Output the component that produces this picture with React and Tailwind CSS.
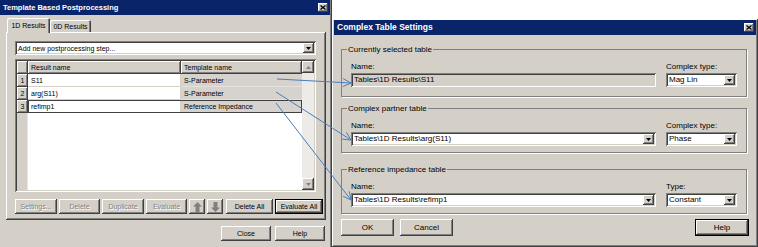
import React from 'react';

// classic 3D bevels
const RAISED = 'shadow-[inset_-1px_-1px_0_#404040,inset_1px_1px_0_#ffffff,inset_-2px_-2px_0_#808080]';
const SUNKEN = 'shadow-[inset_1px_1px_0_#808080,inset_-1px_-1px_0_#ffffff,inset_2px_2px_0_#404040,inset_-2px_-2px_0_#d4d0c8]';
const DEFAULT_BTN = 'shadow-[inset_0_0_0_1px_#000000,inset_-2px_-2px_0_#404040,inset_2px_2px_0_#ffffff,inset_-3px_-3px_0_#808080]';

// blue arrows from the template cells to the dialog fields
const ARROWS = [
  [277, 79, 351, 83],
  [276, 92, 351, 140],
  [276, 103, 351, 200],
];

const arrowHead = (x1, y1, x2, y2) => {
  const l = Math.hypot(x2 - x1, y2 - y1);
  const ux = (x2 - x1) / l;
  const uy = (y2 - y1) / l;
  const bx = x2 - 8 * ux;
  const by = y2 - 8 * uy;
  return `M${bx - 4 * uy} ${by + 4 * ux} L${x2} ${y2} L${bx + 4 * uy} ${by - 4 * ux}`;
};

const TitleBar = ({ title, textClass }) => (
  <div className="h-[15px] bg-[#0a246a] flex items-center justify-between pl-[3px] pr-[2px]">
    <span className={`text-white font-bold ${textClass}`}>{title}</span>
    <div className={`w-[10px] h-[9px] bg-[#d4d0c8] flex items-center justify-center ${RAISED}`}>
      <svg width="6" height="5" viewBox="0 0 6 5">
        <path d="M0.5 0.5 L5.5 4.5 M5.5 0.5 L0.5 4.5" stroke="#000" strokeWidth="1.3" />
      </svg>
    </div>
  </div>
);

const Btn = ({ label, className = '', disabled, isDefault }) => (
  <div
    className={`flex items-center justify-center bg-[#d4d0c8] ${isDefault ? DEFAULT_BTN : RAISED} ${
      disabled ? 'text-[#808080] [text-shadow:1px_1px_0_#ffffff]' : 'text-black'
    } ${className}`}
  >
    {label}
  </div>
);

const DropArrow = () => (
  <div className={`w-[11px] h-full bg-[#d4d0c8] flex items-center justify-center ${RAISED}`}>
    <svg width="5" height="3" viewBox="0 0 5 3">
      <path d="M0 0 H5 L2.5 3 Z" fill="#000" />
    </svg>
  </div>
);

const Combo = ({ value, className = '', readOnly }) => (
  <div className={`h-[14px] p-[2px] flex items-center ${SUNKEN} ${readOnly ? 'bg-[#d4d0c8]' : 'bg-white'} ${className}`}>
    <span className="flex-1 pl-[1px] whitespace-nowrap">{value}</span>
    {!readOnly && <DropArrow />}
  </div>
);

const ScrollArrow = ({ up }) => (
  <div className={`h-[12px] bg-[#d4d0c8] flex items-center justify-center ${RAISED}`}>
    <svg width="5" height="3" viewBox="0 0 5 3">
      <path d={up ? 'M0 3 H5 L2.5 0 Z' : 'M0 0 H5 L2.5 3 Z'} fill="#808080" />
    </svg>
  </div>
);

const MoveBtn = ({ up }) => (
  <div className={`w-[16px] flex items-center justify-center bg-[#d4d0c8] ${RAISED}`}>
    <svg width="9" height="10" viewBox="0 0 9 10">
      <path
        d={up ? 'M4.5 0 L9 4.5 H6.5 V10 H2.5 V4.5 H0 Z' : 'M4.5 10 L9 5.5 H6.5 V0 H2.5 V5.5 H0 Z'}
        fill="#808080"
      />
    </svg>
  </div>
);

const rows = [
  ['1', 'S11', 'S-Parameter'],
  ['2', 'arg(S11)', 'S-Parameter'],
  ['3', 'refimp1', 'Reference Impedance'],
];

const ResultsGrid = () => (
  <div className={`mt-[4px] h-[133px] w-[301px] p-[2px] bg-white flex ${SUNKEN}`}>
    <div className="flex-1 flex flex-col">
      <div className="h-[13px] flex">
        <div className={`w-[11px] bg-[#d4d0c8] ${RAISED}`} />
        <div className={`w-[153px] bg-[#d4d0c8] pl-[3px] flex items-center ${RAISED}`}>Result name</div>
        <div className={`flex-1 bg-[#d4d0c8] pl-[3px] flex items-center ${RAISED}`}>Template name</div>
      </div>
      {rows.map(([n, result, template]) => (
        <div key={n} className="h-[13px] flex">
          <div className={`w-[11px] bg-[#d4d0c8] flex items-center justify-center ${RAISED}`}>{n}</div>
          <div className={`flex-1 flex ${n === '3' ? 'outline outline-[#404040] -outline-offset-1' : ''}`}>
            <div className="w-[153px] bg-white pl-[3px] flex items-center border-r border-b border-[#d4d0c8]">{result}</div>
            <div className="flex-1 bg-[#d6d3ce] pl-[3px] flex items-center border-b border-[#e4e2de]">{template}</div>
          </div>
        </div>
      ))}
      <div className="flex-1 flex">
        <div className="w-[11px] bg-[#d4d0c8] border-r border-[#e8e6e2]" />
        <div className="flex-1 bg-white" />
      </div>
    </div>
    <div className="w-[12px] flex flex-col">
      <ScrollArrow up />
      <div className="flex-1 bg-[#ecebe7]" />
      <ScrollArrow />
    </div>
  </div>
);

const Group = ({ legend, className = '', pad, children }) => (
  <fieldset className={`w-[404px] border border-[#808080] shadow-[1px_1px_0_#ffffff] px-[5px] ${pad} ${className}`}>
    <legend className="px-[1px] leading-[9px]">{legend}</legend>
    <div className="px-[4px] mt-[8px] flex gap-[10px]">{children}</div>
  </fieldset>
);

const Field = ({ label, value, width, readOnly }) => (
  <div className={`flex flex-col ${width}`}>
    <span className="h-[9px] leading-[9px] whitespace-nowrap">{label}</span>
    <Combo value={value} readOnly={readOnly} className="mt-[2px]" />
  </div>
);

export default function App() {
  return (
    <div className="relative w-[758px] h-[247px] flex bg-white overflow-hidden text-black font-['Liberation_Sans',Arial,sans-serif] leading-none">
      {/* Template Based Postprocessing */}
      <div className="w-[332px] h-[247px] bg-[#d4d0c8] flex flex-col pr-[2px] text-[7px] shadow-[inset_-1px_0_0_#404040,inset_-2px_0_0_#808080]">
        <TitleBar title="Template Based Postprocessing" textClass="text-[7.5px]" />
        <div className="mt-[3px] h-[14px] pl-[7px] flex items-end">
          <div className={`relative z-10 -mb-[1px] w-[43px] h-[15px] bg-[#d4d0c8] rounded-t-[2px] flex items-center justify-center shadow-[inset_1px_1px_0_#ffffff,inset_-1px_0_0_#404040,inset_-2px_0_0_#808080]`}>
            1D Results
          </div>
          <div className="w-[41px] h-[12px] rounded-t-[2px] flex items-center justify-center shadow-[inset_1px_1px_0_#ffffff,inset_-1px_0_0_#404040,inset_-2px_0_0_#808080]">
            0D Results
          </div>
        </div>
        <div className={`ml-[6px] w-[320px] h-[188px] pl-[9px] pt-[9px] flex flex-col ${RAISED}`}>
          <Combo value="Add new postprocessing step..." className="w-[301px]" />
          <ResultsGrid />
          <div className="mt-[7px] h-[15px] flex gap-[2px]">
            <Btn label="Settings..." disabled className="w-[42px]" />
            <Btn label="Delete" disabled className="w-[41px]" />
            <Btn label="Duplicate" disabled className="w-[42px]" />
            <Btn label="Evaluate" disabled className="w-[41px]" />
            <MoveBtn up />
            <MoveBtn />
            <Btn label="Delete All" className="ml-[1px] w-[47px]" />
            <Btn label="Evaluate All" isDefault className="w-[48px]" />
          </div>
        </div>
        <div className="mt-[6px] h-[15px] pr-[5px] flex justify-end gap-[4px]">
          <Btn label="Close" className="w-[50px]" />
          <Btn label="Help" className="w-[50px]" />
        </div>
      </div>

      {/* Complex Table Settings */}
      <div className="w-[426px] flex flex-col">
        <div className="h-[19px] bg-white" />
        <div className={`flex-1 bg-[#d4d0c8] pt-[1px] px-[2px] flex flex-col text-[8px] ${RAISED}`}>
          <TitleBar title="Complex Table Settings" textClass="text-[8.5px]" />
          <div className="px-[7px] flex flex-col">
            <Group legend="Currently selected table" className="mt-[10px]" pad="pb-[9px]">
              <Field label="Name:" value="Tables\1D Results\S11" width="w-[305px]" readOnly />
              <Field label="Complex type:" value="Mag Lin" width="w-[71px]" />
            </Group>
            <Group legend="Complex partner table" className="mt-[7px]" pad="pb-[6px]">
              <Field label="Name:" value="Tables\1D Results\arg(S11)" width="w-[305px]" />
              <Field label="Complex type:" value="Phase" width="w-[71px]" />
            </Group>
            <Group legend="Reference impedance table" className="mt-[12px]" pad="pb-[6px]">
              <Field label="Name:" value="Tables\1D Results\refimp1" width="w-[305px]" />
              <Field label="Type:" value="Constant" width="w-[71px]" />
            </Group>
            <div className="mt-[5px] h-[17px] flex gap-[6px]">
              <Btn label="OK" className="w-[53px]" />
              <Btn label="Cancel" className="w-[53px]" />
              <Btn label="Help" isDefault className="ml-auto w-[54px]" />
            </div>
          </div>
        </div>
      </div>

      <svg className="absolute inset-0 pointer-events-none" width="758" height="247">
        {ARROWS.map(([x1, y1, x2, y2], i) => (
          <g key={i} stroke="#4a7ebb" strokeWidth="1" fill="none">
            <path d={`M${x1} ${y1} L${x2} ${y2}`} />
            <path d={arrowHead(x1, y1, x2, y2)} />
          </g>
        ))}
      </svg>
    </div>
  );
}
